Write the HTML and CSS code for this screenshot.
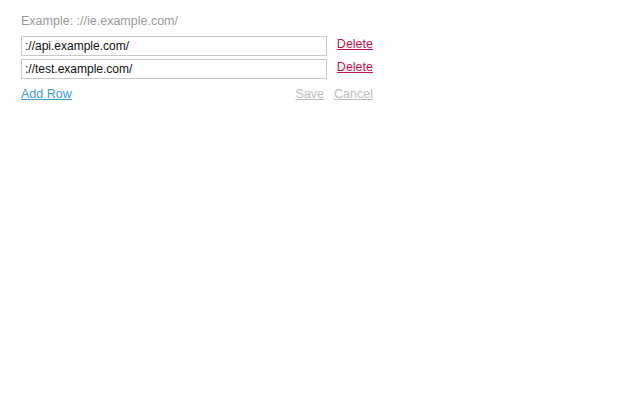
FILE: index.html
```html
<!DOCTYPE html>
<html>
<head>
<meta charset="utf-8">
<link rel="stylesheet" href="styles.css">
</head>
<body>
<div class="panel">
  <div class="example">Example: ://ie.example.com/</div>
  <div class="row">
    <input class="field" type="text" value="://api.example.com/">
    <a class="delete" href="#">Delete</a>
  </div>
  <div class="row">
    <input class="field" type="text" value="://test.example.com/">
    <a class="delete" href="#">Delete</a>
  </div>
  <div class="actions">
    <a class="add" href="#">Add Row</a>
    <div class="buttons">
      <a class="muted" href="#">Save</a>
      <a class="muted" href="#">Cancel</a>
    </div>
  </div>
</div>
</body>
</html>
```
FILE: styles.css
```css
html, body {
  margin: 0;
  padding: 0;
  background: #fefefe;
}
body {
  font-family: "Liberation Sans", Arial, sans-serif;
  font-size: 12px;
  color: #222;
}
.panel {
  width: 352px;
  padding: 14px 0 0 21px;
}
.example {
  color: #9a9a9a;
  font-size: 12.5px;
  line-height: 15px;
  margin-bottom: 7px;
}
.row {
  display: flex;
  align-items: flex-start;
  gap: 10px;
  margin-bottom: 3px;
}
.field {
  box-sizing: border-box;
  width: 306px;
  height: 20px;
  margin: 0;
  padding: 0 3px;
  border: 1px solid #c8c8c8;
  border-radius: 0;
  background: #fff;
  font-family: "Liberation Sans", Arial, sans-serif;
  font-size: 12px;
  color: #111;
  outline: none;
}
.delete {
  color: #c4124f;
  font-size: 12.5px;
  line-height: 16px;
  text-decoration: underline;
}
.actions {
  display: flex;
  justify-content: space-between;
  align-items: center;
  margin-top: 8px;
}
.add {
  color: #3b9bd6;
  font-size: 12.5px;
  text-decoration: underline;
}
.buttons {
  display: flex;
  gap: 10px;
}
.muted {
  color: #bdbdbd;
  font-size: 12.5px;
  text-decoration: underline;
}
```
